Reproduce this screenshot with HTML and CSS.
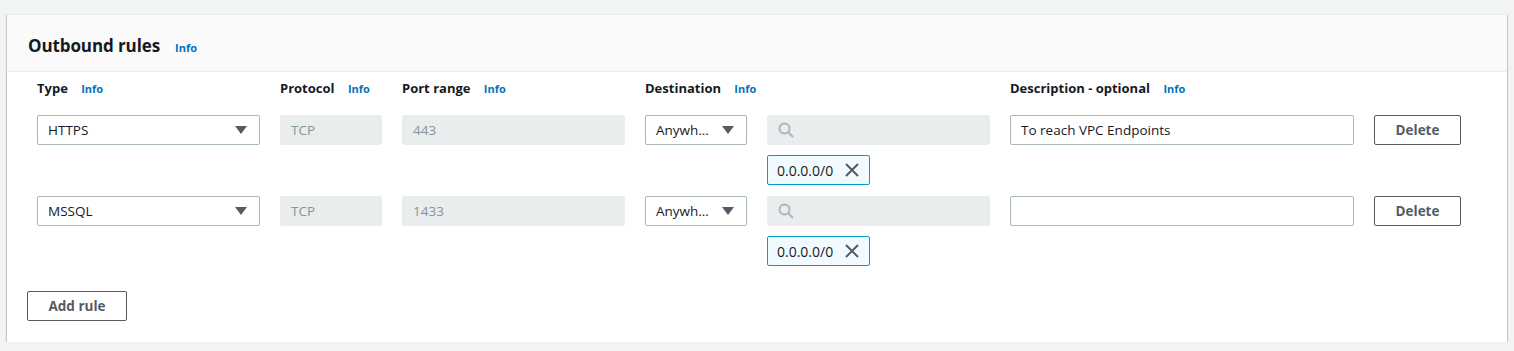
FILE: index.html
```html
<!DOCTYPE html>
<html lang="en">
<head>
  <meta charset="UTF-8" />
  <title>Outbound rules</title>
  <link rel="stylesheet" href="styles.css">
</head>
<body>
  <div class="panel">
    <div class="panel-header">
      <h2>Outbound rules</h2>
      <a class="info" href="#">Info</a>
    </div>

    <div class="panel-body">
      <div class="rules">
        <!-- column labels -->
        <div class="label">Type <a class="info" href="#">Info</a></div>
        <div class="label">Protocol <a class="info" href="#">Info</a></div>
        <div class="label">Port range <a class="info" href="#">Info</a></div>
        <div class="label span2">Destination <a class="info" href="#">Info</a></div>
        <div class="label">Description - optional <a class="info" href="#">Info</a></div>
        <div></div>

        <!-- rule 1 -->
        <div class="select">HTTPS <span class="caret"></span></div>
        <div class="field disabled">TCP</div>
        <div class="field disabled">443</div>
        <div class="select">Anywh&hellip; <span class="caret"></span></div>
        <div class="cell-stack">
          <div class="field search">
            <svg width="16" height="16" viewBox="0 0 16 16"><circle cx="6.5" cy="6.5" r="5" fill="none" stroke="#aab7b8" stroke-width="2"/><line x1="10" y1="10" x2="15" y2="15" stroke="#aab7b8" stroke-width="2"/></svg>
          </div>
          <div class="token">0.0.0.0/0
            <svg class="token-x" width="14" height="14" viewBox="0 0 14 14"><path d="M1 1 L13 13 M13 1 L1 13" stroke="#545b64" stroke-width="2" fill="none"/></svg>
          </div>
        </div>
        <div class="field">To reach VPC Endpoints</div>
        <button class="btn">Delete</button>

        <!-- rule 2 -->
        <div class="select">MSSQL <span class="caret"></span></div>
        <div class="field disabled">TCP</div>
        <div class="field disabled">1433</div>
        <div class="select">Anywh&hellip; <span class="caret"></span></div>
        <div class="cell-stack">
          <div class="field search">
            <svg width="16" height="16" viewBox="0 0 16 16"><circle cx="6.5" cy="6.5" r="5" fill="none" stroke="#aab7b8" stroke-width="2"/><line x1="10" y1="10" x2="15" y2="15" stroke="#aab7b8" stroke-width="2"/></svg>
          </div>
          <div class="token">0.0.0.0/0
            <svg class="token-x" width="14" height="14" viewBox="0 0 14 14"><path d="M1 1 L13 13 M13 1 L1 13" stroke="#545b64" stroke-width="2" fill="none"/></svg>
          </div>
        </div>
        <div class="field"></div>
        <button class="btn">Delete</button>
      </div>

      <button class="btn add">Add rule</button>
    </div>
  </div>
</body>
</html>
```

FILE: styles.css
```css
body {
  margin: 0;
  padding: 14px 7px 0;
  background-color: #f2f3f3;
  font-family: "Open Sans", Arial, sans-serif;
  font-size: 14px;
  color: #16191f;
}

/* Container card */
.panel {
  background-color: #fff;
  box-shadow: 0 1px 1px 0 rgba(0, 28, 36, 0.3), 1px 1px 1px 0 rgba(0, 28, 36, 0.15), -1px 1px 1px 0 rgba(0, 28, 36, 0.15);
  border-top: 1px solid #eaeded;
}

.panel-header {
  display: flex;
  align-items: baseline;
  gap: 15px;
  height: 57px;
  box-sizing: border-box;
  padding: 19px 20px 0 21px;
  background-color: #fafafa;
  border-bottom: 1px solid #eaeded;
}

.panel-header h2 {
  margin: 0;
  font-size: 17px;
  font-weight: 700;
  letter-spacing: -0.1px;
}

.info {
  font-size: 11px;
  font-weight: 700;
  color: #0073bb;
  text-decoration: none;
  margin-left: 10px;
}

.panel-header .info {
  margin-left: 0;
}

.panel-body {
  padding: 5px 20px 21px;
}

/* Rules grid */
.rules {
  display: grid;
  grid-template-columns: 223px 102px 223px 102px 223px 344px 87px;
  column-gap: 20px;
  row-gap: 11px;
  align-items: start;
  padding-left: 10px;
}

.label {
  font-weight: 700;
  font-size: 13px;
  height: 22px;
  line-height: 22px;
  margin-bottom: 5px;
  white-space: nowrap;
}

.span2 {
  grid-column: span 2;
}

.field,
.select {
  height: 30px;
  box-sizing: border-box;
  border: 1px solid #aab7b8;
  border-radius: 2px;
  padding: 0 10px;
  display: flex;
  align-items: center;
  font-size: 13.5px;
  white-space: nowrap;
}

.disabled {
  background-color: #eaeded;
  border-color: #eaeded;
  color: #879596;
}

.search {
  background-color: #eaeded;
  border-color: #eaeded;
}

.select {
  justify-content: space-between;
}

.caret {
  width: 0;
  height: 0;
  border-left: 6px solid transparent;
  border-right: 6px solid transparent;
  border-top: 8px solid #545b64;
  margin-right: 2px;
}

.cell-stack {
  display: flex;
  flex-direction: column;
  gap: 10px;
}

.token {
  align-self: flex-start;
  display: flex;
  align-items: center;
  gap: 12px;
  height: 30px;
  box-sizing: border-box;
  padding: 0 10px 0 9px;
  background-color: #f1faff;
  border: 1px solid #00a1c9;
  border-radius: 2px;
  font-size: 14px;
}

.token-x {
  display: block;
}

.btn {
  height: 30px;
  box-sizing: border-box;
  background-color: #fff;
  border: 1px solid #545b64;
  border-radius: 2px;
  color: #545b64;
  font-family: inherit;
  font-weight: 700;
  font-size: 13.5px;
  padding: 0;
}

.add {
  width: 100px;
  margin-top: 25px;
}
```
